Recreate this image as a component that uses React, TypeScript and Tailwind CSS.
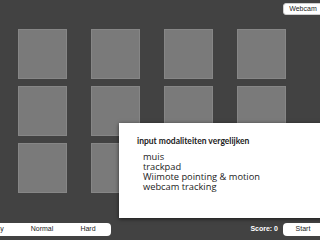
import React from "react";

const Sq = () => (
  <div className="h-[50px] w-[49px] bg-[#7a7a7a] border border-[#868686]" />
);

export default function App() {
  const items = ["muis", "trackpad", "Wiimote pointing & motion", "webcam tracking"];
  return (
    <div
      className="relative flex h-[240px] w-[320px] flex-col overflow-hidden bg-[#424242]"
      style={{ fontFamily: '"Liberation Sans", Arial, sans-serif' }}
    >
      <div className="flex h-[29px] justify-end pt-[3px]">
        <div className="flex h-[12px] w-[40px] items-center justify-center rounded-l-[3px] border border-[#cfcfcf] bg-white text-[7px] text-[#222] -mr-[3px]">
          Webcam
        </div>
      </div>
      <div className="grid grid-cols-[49px_49px_49px_49px] gap-x-[24px] gap-y-[7px] pl-[18px]">
        {Array.from({ length: 12 }).map((_, i) => (
          <Sq key={i} />
        ))}
      </div>
      <div className="mt-auto flex h-[17px] items-start justify-between pb-[4px]">
        <div className="-ml-[27px] flex h-[13px] w-[138px] items-center rounded-r-[4px] bg-white text-[7px] text-[#222]">
          <span className="w-[46px] text-center">Easy</span>
          <span className="w-[46px] text-center">Normal</span>
          <span className="w-[46px] text-center">Hard</span>
        </div>
        <div className="flex items-center">
          <span className="mr-[5px] text-[7px] font-bold text-white">Score: 0</span>
          <div className="flex h-[13px] w-[40px] items-center justify-center rounded-l-[4px] bg-white text-[7px] text-[#222] -mr-[3px]">
            Start
          </div>
        </div>
      </div>
      <div
        className="absolute left-[119px] top-[123px] h-[95px] w-[210px] bg-white pl-[18px] pt-[12px] text-[#222] shadow-[0_1px_4px_rgba(0,0,0,0.6)]"
        style={{ fontFamily: '"Open Sans", "Noto Sans", sans-serif' }}
      >
        <div
          className="text-[8.5px] font-bold leading-[12px]"
          style={{ fontFamily: 'Lato, "Open Sans", sans-serif' }}
        >
          input modaliteiten vergelijken
        </div>
        <div className="mt-[5px] pl-[6px]">
          {items.map((t) => (
            <div key={t} className="text-[9.3px] leading-[10px]">
              {t}
            </div>
          ))}
        </div>
      </div>
    </div>
  );
}
